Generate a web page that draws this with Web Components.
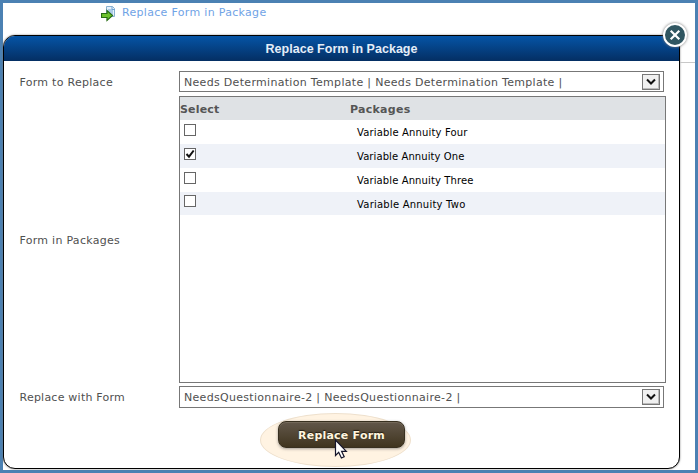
<!DOCTYPE html>
<html lang="en"><head><meta charset="utf-8"><title>Replace Form in Package</title>
<style>html,body{margin:0;width:698px;height:473px;overflow:hidden}body{font:11px/14px "DejaVu Sans",sans-serif;color:#505050}</style>
</head><body><app-window></app-window>
<script>
function define(name, markup, ready) {
  const template = document.createElement('template');
  template.innerHTML = markup;
  customElements.define(name, class extends HTMLElement {
    connectedCallback() {
      if (this.shadowRoot) return;
      this.attachShadow({mode: 'open'}).append(template.content.cloneNode(true));
      if (ready) ready.call(this, this.shadowRoot);
    }
  });
}
/* Single line of text tracked to a given width. */
define('ui-text', `<style>:host{display:inline-block;white-space:pre}span{display:inline-block}</style><span><slot></slot></span>`, function (root) {
  const s = root.querySelector('span'), w = +this.getAttribute('width');
  const natural = s.getBoundingClientRect().width;
  s.style.letterSpacing = (w - natural) / this.textContent.length + 'px';
});
define('ui-select', `<style>
:host{display:flex;box-sizing:border-box;width:485px;height:21px;border:1px solid #777;background:#fff;align-items:center;padding:0 3px 0 4px;justify-content:space-between}
:host([tall]){height:22px}::slotted(*){padding-top:2px}
i{display:block;box-sizing:border-box;width:18px;height:16px;border:1px solid #777;background:#f0f0f0;box-shadow:inset -1px -1px #bbb}svg{display:block}
</style><slot></slot><i><svg width="16" height="14"><path d="M4 4.5L8 8.5L12 4.5" fill="none" stroke="#111" stroke-width="2"/></svg></i>`);
define('ui-check', `<style>
:host{display:block;box-sizing:border-box;width:12px;height:12px;border:1px solid #666;background:#fff}
svg{display:none}:host([checked]) svg{display:block}
</style><svg width="10" height="10"><path d="M1.5 5L4 7.7L8.7 1.5" fill="none" stroke="#111" stroke-width="2"/></svg>`);
define('package-row', `<style>
:host{display:flex;height:24px;color:#000;font-size:10px}:host([shade]){background:#eff2f8}:host([last]){height:23px}
ui-check{margin:4px 161px 0 4px}:host([last]) ui-check{margin-top:3px}div{padding-top:6px}
</style><ui-check></ui-check><div><slot></slot></div>`, function (root) {
  if (this.hasAttribute('checked')) root.querySelector('ui-check').setAttribute('checked', '');
});
define('package-list', `<style>
:host{display:block;box-sizing:border-box;width:487px;height:287px;border:1px solid #777;background:#fff}
header{display:grid;grid-template-columns:170px 1fr;height:23px;background:#dfe2e5;align-items:center;font-weight:bold;color:#555;padding-top:2px;box-sizing:border-box}
</style><header><ui-text width="39.5">Select</ui-text><ui-text width="60.5">Packages</ui-text></header>
<package-row><ui-text width="110.5">Variable Annuity Four</ui-text></package-row>
<package-row shade checked><ui-text width="107.5">Variable Annuity One</ui-text></package-row>
<package-row><ui-text width="116.5">Variable Annuity Three</ui-text></package-row>
<package-row shade last><ui-text width="108.5">Variable Annuity Two</ui-text></package-row>`);
define('close-button', `<style>:host{display:block;width:30px;height:30px}svg{display:block;filter:drop-shadow(0 0 1.5px #777)}</style>
<svg width="30" height="30"><circle cx="15" cy="15" r="11" fill="#305661" stroke="#fff" stroke-width="2"/><path d="M10.7 10.7L19.3 19.3M19.3 10.7L10.7 19.3" stroke="#fff" stroke-width="2.2"/></svg>`);
define('action-button', `<style>
:host{display:flex;box-sizing:border-box;width:127px;height:27px;border:1px solid #383020;border-radius:8px;align-items:center;justify-content:center;background:linear-gradient(#62574a,#40351f);box-shadow:0 1px 3px #5558,inset 0 1px #74695a;color:#fff5df;font-weight:bold;text-shadow:0 -1px 1px #211b10}
::slotted(*){padding-top:2px}
</style><slot></slot>`);
define('form-dialog', `<style>
:host{display:block;box-sizing:border-box;width:677px;height:434px;border:1px solid #000;border-radius:12px;background:#fff;box-shadow:0 0 2px #777}
.title{display:flex;height:25px;align-items:center;justify-content:center;border-radius:11px 11px 0 0;background:linear-gradient(#0554a6,#042f63);color:#e4edf8;font:bold 12.5px/14px "Liberation Sans",sans-serif}
.body{display:grid;grid-template-columns:159.5px 487px;grid-template-rows:25px 290px 22px;padding:10px 0 0 15.5px;align-items:start}
.a{padding-top:5px}.b{padding-top:138px}
footer{display:flex;margin:5px 0 0 256px;width:151px;height:54px;box-sizing:border-box;border:1px solid #eee0cd;border-radius:50%;background:#fff3e2;padding:7px 0 0 17px}
</style><div class="title"><ui-text width="152">Replace Form in Package</ui-text></div>
<div class="body"><div class="a"><ui-text width="93.5">Form to Replace</ui-text></div><ui-select><ui-text width="378.5">Needs Determination Template | Needs Determination Template |</ui-text></ui-select>
<div class="b"><ui-text width="100.5">Form in Packages</ui-text></div><package-list></package-list>
<div class="a"><ui-text width="105.5">Replace with Form</ui-text></div><ui-select tall><ui-text width="276.5">NeedsQuestionnaire-2 | NeedsQuestionnaire-2 |</ui-text></ui-select></div>
<footer><action-button><ui-text width="87">Replace Form</ui-text></action-button></footer>`);
define('app-window', `<style>
:host{display:block;position:relative;box-sizing:border-box;width:698px;height:473px;border:3px solid #4b81b3;background:#fff}
.link{display:flex;height:32px;box-sizing:border-box;padding:3px 0 0 98px;color:#6fa3e6}.link ui-text{margin-left:5px}
.stage{display:flex}.rule{flex:1;height:27px;border-bottom:1px solid #c8c8c8}
close-button{position:absolute;left:657px;top:17px}.cursor{position:absolute;left:331px;top:436px}
</style><div class="link"><svg width="16" height="16"><path d="M5.5 .5h6l2 2v8h-8z" fill="#e5f1fb" stroke="#86aed0"/><path d="M11 .5v3h3M7 4h5M7 6h5M8 8h4" fill="none" stroke="#72a5d4"/><path d="M.5 7.5h5.5V4.5L11.5 9.5L6 14.5V11.5H.5z" fill="#6dc32c" stroke="#286d15" stroke-width="1.2"/></svg><ui-text width="144.5">Replace Form in Package</ui-text></div>
<div class="stage"><form-dialog></form-dialog><div class="rule"></div></div><close-button></close-button>
<svg class="cursor" width="14" height="21"><path d="M1.5 1v15.5l3.2-3.2 2.7 5.7 2.8-1.2-2.6-5.5h4.7z" fill="#fff" stroke="#15152b" stroke-width="1.2"/></svg>`);
</script></body></html>
